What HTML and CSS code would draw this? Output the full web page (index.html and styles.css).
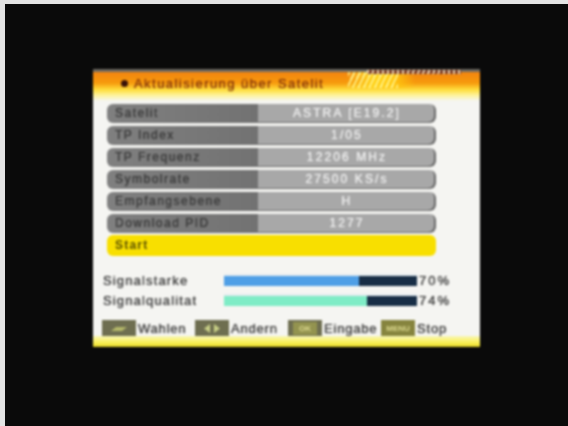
FILE: index.html
```html
<!DOCTYPE html>
<html lang="de">
<head>
<meta charset="utf-8">
<title>Aktualisierung über Satelit</title>
<link rel="stylesheet" href="styles.css">
</head>
<body>
<main class="screen">
  <section class="panel">
    <header class="head">
      <div class="hatch"></div>
      <span class="bullet"></span>
      <h1 class="title">Aktualisierung über Satelit</h1>
    </header>
    <div class="rows">
      <div class="row"><span class="key">Satelit</span><span class="val">ASTRA [E19.2]</span></div>
      <div class="row"><span class="key">TP Index</span><span class="val">1/05</span></div>
      <div class="row"><span class="key">TP Frequenz</span><span class="val">12206 MHz</span></div>
      <div class="row"><span class="key">Symbolrate</span><span class="val">27500 KS/s</span></div>
      <div class="row"><span class="key">Empfangsebene</span><span class="val">H</span></div>
      <div class="row"><span class="key">Download PID</span><span class="val">1277</span></div>
      <div class="row start"><span class="key">Start</span></div>
    </div>
    <div class="signals">
      <div class="signal"><span class="sig-name">Signalstarke</span><div class="bar"><div class="fill blue" style="width:70%"></div></div><span class="pct">70%</span></div>
      <div class="signal"><span class="sig-name">Signalqualitat</span><div class="bar"><div class="fill mint" style="width:74%"></div></div><span class="pct">74%</span></div>
    </div>
    <footer class="keys">
      <div class="hint"><span class="btn"><svg viewBox="0 0 34 15" class="ico"><path d="M9 10l5-4h11l-5 4z" fill="#b4b86a"/></svg></span><span class="hint-text">Wahlen</span></div>
      <div class="hint"><span class="btn"><svg viewBox="0 0 34 15" class="ico"><path d="M15 3v9l-6-4.500zM19 3v9l6-4.500z" fill="#c8cf86"/></svg></span><span class="hint-text">Andern</span></div>
      <div class="hint"><span class="btn"><span class="btn-label ok">OK</span></span><span class="hint-text">Eingabe</span></div>
      <div class="hint"><span class="btn menu"><span class="btn-label">MENU</span></span><span class="hint-text">Stop</span></div>
    </footer>
  </section>
</main>
</body>
</html>
```
FILE: styles.css
```css
* { box-sizing: border-box; margin: 0; padding: 0; }
html, body { height: 100%; overflow: hidden; }
body {
  background: #e4e4e4;
  padding: 4px 0 0 5px;
  font-family: "Liberation Sans", Arial, sans-serif;
}
.screen {
  height: 422px;
  background: #0a0a0a;
  padding: 65px 0 0 88px;
}
.panel {
  width: 387px;
  height: 278px;
  background: #f5f5f2;
  display: flex;
  flex-direction: column;
  filter: blur(0.8px);
}
.head {
  position: relative;
  height: 32px;
  flex: none;
  display: flex;
  align-items: center;
  gap: 4px;
  padding: 3px 0 0 28px;
  border-top: 3px solid #6e6a62;
  background:
    repeating-linear-gradient(115deg, rgba(255,244,140,.9) 0 2px, rgba(255,190,0,0) 2px 5px) 255px 0 / 50px 16px no-repeat,
    linear-gradient(90deg, transparent 0 254px, #ffd21a 280px, #ffc60f 300px, transparent 322px) 0 0 / 100% 16px no-repeat,
    linear-gradient(180deg, #f28410 0, #f79a0c 38%, #ffe040 62%, #fdf4a4 82%, #f5f5f2 100%);
}
.hatch {
  position: absolute;
  left: 274px;
  top: -2px;
  width: 94px;
  height: 4px;
  background: repeating-linear-gradient(100deg, #e8d0b0 0 2px, #7a3a22 2px 5px);
}
.bullet {
  width: 7px;
  height: 7px;
  border-radius: 50%;
  background: #3a1208;
  flex: none;
  margin-top: -9px;
}
.title {
  font-size: 13px;
  font-weight: 400;
  letter-spacing: 1.45px;
  color: #8a3a0c;
  margin: -9px 0 0 2px;
  white-space: nowrap;
  text-shadow: 0 0 1px #8a3a0c;
}
.rows {
  display: flex;
  flex-direction: column;
  gap: 3px;
  margin: 3px 0 0 14px;
  width: 329px;
}
.row {
  height: 19px;
  display: flex;
  border-radius: 6px;
  overflow: hidden;
  font-size: 12px;
  line-height: 19px;
}
.key {
  width: 151px;
  flex: none;
  padding-left: 8px;
  background: linear-gradient(90deg, #808080, #727272);
  color: #3c3c3c;
  letter-spacing: 1.5px;
  text-shadow: 0 0 1px #3c3c3c;
}
.val {
  flex: 1;
  text-align: center;
  background: #a8a8a8;
  color: #eeeeee;
  letter-spacing: 2.1px;
  box-shadow: inset -2px -1px 0 #6a6a6a;
  border-radius: 0 6px 6px 0;
  text-shadow: 0 0 1px #eeeeee;
}
.row.start {
  height: 21px;
  margin-top: -1px;
  background: #f8df00;
  line-height: 21px;
}
.start .key {
  background: transparent;
  color: #5c5200;
  font-weight: 700;
  letter-spacing: 1.2px;
  text-shadow: none;
}
.signals {
  display: flex;
  flex-direction: column;
  gap: 8px;
  margin: 18px 0 0 10px;
}
.signal {
  display: flex;
  align-items: center;
  height: 12px;
  font-size: 13px;
  color: #444444;
  text-shadow: 0 0 1px #444444;
}
.sig-name {
  width: 121px;
  flex: none;
  white-space: nowrap;
  letter-spacing: 1.15px;
}
.bar {
  width: 193px;
  height: 12px;
  background: #172d45;
  border-top: 2px solid #e3eaee;
  flex: none;
}
.fill { height: 100%; }
.blue { background: #4f9fe6; }
.mint { background: #7fecc6; }
.pct {
  margin-left: 2px;
  letter-spacing: 2px;
}
.keys {
  display: flex;
  margin: 14px 0 0 9px;
}
.hint {
  width: 93px;
  flex: none;
  display: flex;
  align-items: center;
  gap: 2px;
  height: 16px;
}
.btn {
  width: 34px;
  height: 16px;
  flex: none;
  display: flex;
  align-items: center;
  justify-content: center;
  background: #6e6e50;
}
.btn.menu { background: #86843e; }
.ico { width: 34px; height: 15px; display: block; }
.btn-label {
  font-size: 8px;
  font-weight: 700;
  color: #dcd98e;
}
.btn-label.ok { background: #93934f; padding: 2px 6px; line-height: 9px; }
.hint-text {
  font-size: 13px;
  letter-spacing: 0.8px;
  color: #444444;
  white-space: nowrap;
  text-shadow: 0 0 1px #444444;
}
.panel::after {
  content: "";
  flex: 1;
  background: linear-gradient(180deg, #f8f6b8 0, #fbf264 50%, #f0e438 85%, #c8ba20 100%);
}
```
